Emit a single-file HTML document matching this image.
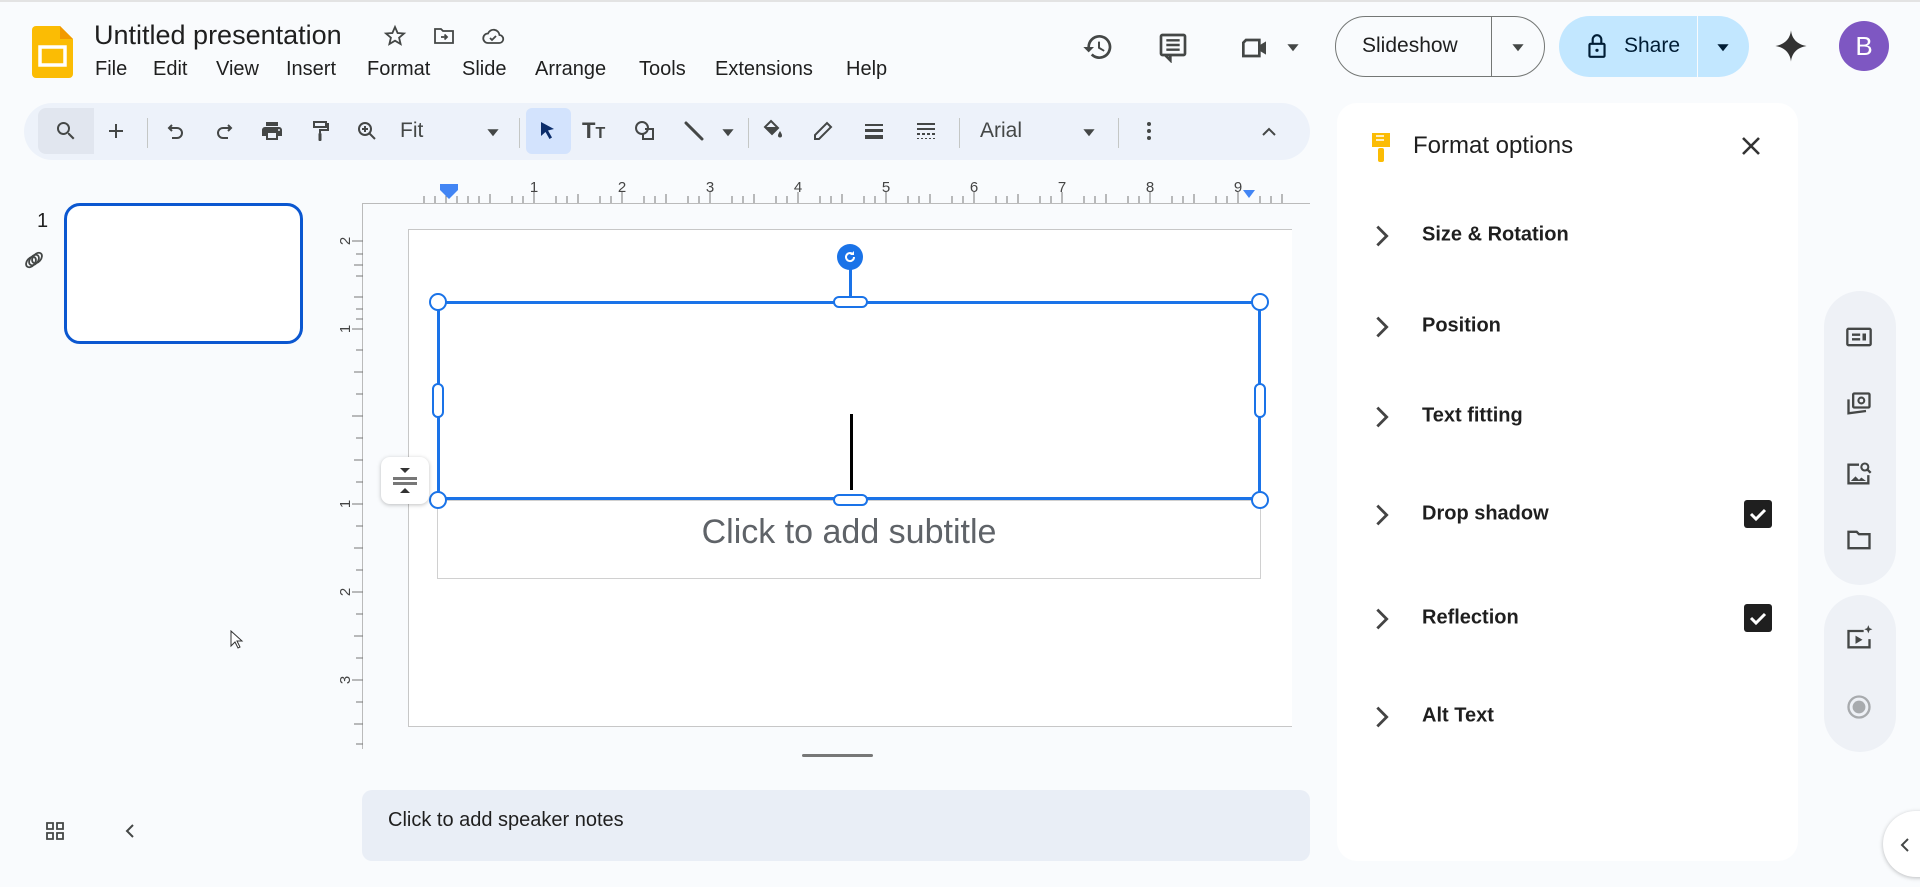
<!DOCTYPE html>
<html><head><meta charset="utf-8"><style>
*{box-sizing:border-box;margin:0;padding:0}
body{width:1920px;height:887px;background:#f9fbfd;font-family:"Liberation Sans",sans-serif;color:#1f1f1f;position:relative;overflow:hidden}
.a{position:absolute}
svg.i{position:absolute;width:24px;height:24px;fill:#444746}
.menu span{position:absolute;top:58px;font-size:20px;color:#1f1f1f}
.lbl{position:absolute;left:1422px;font-size:20px;font-weight:600;color:#1f1f1f;transform:translateY(-50%)}
.chev{position:absolute;left:1368px;width:28px;height:28px;transform:translateY(-50%)}
.cb{position:absolute;left:1744px;width:28px;height:28px;background:#1f1f1f;border-radius:3px;transform:translateY(-50%)}
.h{position:absolute;width:18px;height:18px;border:2.5px solid #1a73e8;background:#fff;border-radius:50%;transform:translate(-50%,-50%)}
.div{position:absolute;top:118px;width:1px;height:30px;background:#c4c7c5}
.r{width:28px!important;height:28px!important}
</style></head><body>
<div class="a" style="left:0;top:0;width:1920px;height:2px;background:#e3e3e3"></div>
<svg class="a" style="left:32px;top:26px" width="41" height="52" viewBox="0 0 41 52"><path d="M4 0h24l13 13v35a4 4 0 0 1-4 4H4a4 4 0 0 1-4-4V4a4 4 0 0 1 4-4z" fill="#fbbc04"/><path d="M28 0l13 13H28z" fill="#f29900"/><rect x="8" y="21" width="25" height="18" fill="none" stroke="#fff" stroke-width="3.5"/></svg>
<div class="a" style="left:94px;top:20px;font-size:27px;color:#1f1f1f">Untitled presentation</div>
<svg class="i" style="left:383px;top:24px" viewBox="0 0 24 24"><path d="M12 3l2.6 6 6.4.5-4.9 4.2 1.5 6.3L12 16.7 6.4 20l1.5-6.3L3 9.5 9.4 9z" fill="none" stroke="#444746" stroke-width="1.8"/></svg>
<svg class="i" style="left:432px;top:24px" viewBox="0 0 24 24"><path d="M3 5h6l2 2h10v12H3z" fill="none" stroke="#444746" stroke-width="1.8"/><path d="M9 13h6m-2.5-2.5L15 13l-2.5 2.5" fill="none" stroke="#444746" stroke-width="1.8"/></svg>
<svg class="i" style="left:481px;top:24px" viewBox="0 0 24 24"><path d="M7 19h11a4 4 0 0 0 .5-8A6 6 0 0 0 7 9.5 4.5 4.5 0 0 0 7 19z" fill="none" stroke="#444746" stroke-width="1.8"/><path d="M9 14l2 2 4-4" fill="none" stroke="#444746" stroke-width="1.8"/></svg>
<div class="menu"><span style="left:95px">File</span><span style="left:153px">Edit</span><span style="left:216px">View</span><span style="left:286px">Insert</span><span style="left:367px">Format</span><span style="left:462px">Slide</span><span style="left:535px">Arrange</span><span style="left:639px">Tools</span><span style="left:715px">Extensions</span><span style="left:846px">Help</span></div>
<svg class="i" style="left:1082px;top:31px;width:32px;height:32px" viewBox="0 0 24 24"><path d="M13 3a9 9 0 0 0-9 9H1l4 4 4-4H6a7 7 0 1 1 2 4.9l-1.4 1.4A9 9 0 1 0 13 3zm-1 5v5l4.3 2.5.7-1.2-3.5-2.1V8z"/></svg>
<svg class="i" style="left:1157px;top:31px;width:32px;height:32px" viewBox="0 0 24 24"><path d="M4 3h16a1 1 0 0 1 1 1v13a1 1 0 0 1-1 1H6l-0 0v0l4 4V18H4a1 1 0 0 1-1-1V4a1 1 0 0 1 1-1z" fill="none" stroke="#444746" stroke-width="2"/><path d="M7 7h10M7 10.5h10M7 14h10" stroke="#444746" stroke-width="1.8"/></svg>
<svg class="i" style="left:1238px;top:32px;width:32px;height:32px" viewBox="0 0 24 24"><path d="M6 6h10v12H4V8z" fill="none" stroke="#444746" stroke-width="2"/><path d="M16 10l5-3v10l-5-3z" fill="#444746"/></svg>
<svg class="i" style="left:1286px;top:40px;width:14px;height:14px" viewBox="0 0 10 10"><path d="M1 3h8L5 8z"/></svg>
<div class="a" style="left:1335px;top:16px;width:210px;height:61px;border:1px solid #747775;border-radius:31px"></div>
<div class="a" style="left:1491px;top:16px;width:1px;height:61px;background:#747775"></div>
<div class="a" style="left:1362px;top:34px;font-size:21px;color:#1f1f1f">Slideshow</div>
<svg class="i" style="left:1511px;top:40px;width:14px;height:14px" viewBox="0 0 10 10"><path d="M1 3h8L5 8z"/></svg>
<div class="a" style="left:1559px;top:16px;width:190px;height:61px;background:#c2e7ff;border-radius:31px"></div>
<div class="a" style="left:1697px;top:16px;width:1px;height:61px;background:#f9fbfd"></div>
<svg class="i" style="left:1584px;top:32px;width:26px;height:28px" viewBox="0 0 24 26"><rect x="5" y="11" width="14" height="12" rx="1" fill="none" stroke="#001d35" stroke-width="2"/><path d="M8 11V7a4 4 0 0 1 8 0v4" fill="none" stroke="#001d35" stroke-width="2"/><circle cx="12" cy="17" r="1.5" fill="#001d35"/></svg>
<div class="a" style="left:1624px;top:34px;font-size:21px;color:#001d35">Share</div>
<svg class="i" style="left:1716px;top:40px;width:14px;height:14px" viewBox="0 0 10 10"><path d="M1 3h8L5 8z" fill="#001d35"/></svg>
<svg class="i" style="left:1774px;top:29px;width:34px;height:34px" viewBox="0 0 24 24"><path d="M12 1c.6 6 4.5 10 11 11-6.5 1-10.4 5-11 11-.6-6-4.5-10-11-11C7.5 11 11.4 7 12 1z" fill="#333"/></svg>
<div class="a" style="left:1839px;top:21px;width:50px;height:50px;border-radius:50%;background:#7e57c2;color:#fff;font-size:26px;text-align:center;line-height:50px">B</div>
<div class="a" style="left:24px;top:103px;width:1286px;height:57px;background:#edf2fa;border-radius:29px"></div>
<div class="a" style="left:38px;top:108px;width:56px;height:46px;background:#e1e6ef;border-radius:8px 0 0 8px"></div>
<div class="a" style="left:526px;top:108px;width:45px;height:46px;background:#d3e3fd;border-radius:6px"></div>
<svg class="i" style="left:54px;top:119px" viewBox="0 0 24 24"><path d="M15.5 14h-.79l-.28-.27A6.47 6.47 0 0 0 16 9.5 6.5 6.5 0 1 0 9.5 16c1.61 0 3.09-.59 4.23-1.57l.27.28v.79l5 4.99L20.49 19l-4.99-5zm-6 0C7.010 14 5 11.99 5 9.5S7.01 5 9.5 5 14 7.01 14 9.5 11.99 14 9.5 14z"/></svg>
<svg class="i" style="left:104px;top:119px" viewBox="0 0 24 24"><path d="M19 13h-6v6h-2v-6H5v-2h6V5h2v6h6v2z"/></svg>
<div class="div" style="left:147px"></div>
<svg class="i" style="left:164px;top:120px" viewBox="0 0 24 24"><path d="M8 5L5 8l3 3M5 8h8a5 5 0 0 1 0 10H8" fill="none" stroke="#444746" stroke-width="2"/></svg>
<svg class="i" style="left:212px;top:120px" viewBox="0 0 24 24"><path d="M16 5l3 3-3 3M19 8h-8a5 5 0 0 0 0 10h5" fill="none" stroke="#444746" stroke-width="2"/></svg>
<svg class="i" style="left:260px;top:119px" viewBox="0 0 24 24"><path d="M19 8H5c-1.66 0-3 1.34-3 3v6h4v4h12v-4h4v-6c0-1.66-1.34-3-3-3zm-3 11H8v-5h8v5zm3-7c-.55 0-1-.45-1-1s.45-1 1-1 1 .45 1 1-.45 1-1 1zm-1-9H6v4h12V3z"/></svg>
<svg class="i" style="left:308px;top:119px" viewBox="0 0 24 24"><path d="M6 3h12v5H6zM18 5h2v6h-8v3" fill="none" stroke="#444746" stroke-width="2"/><rect x="10.5" y="14" width="3" height="8" rx="1"/></svg>
<svg class="i" style="left:355px;top:119px" viewBox="0 0 24 24"><circle cx="10" cy="10" r="6" fill="none" stroke="#444746" stroke-width="2"/><path d="M14.5 14.5L20 20M10 7v6M7 10h6" stroke="#444746" stroke-width="2"/></svg>
<div class="a" style="left:400px;top:119px;font-size:21px;color:#444746">Fit</div>
<svg class="i" style="left:486px;top:125px;width:14px;height:14px" viewBox="0 0 10 10"><path d="M1 3h8L5 8z"/></svg>
<div class="div" style="left:519px"></div>
<svg class="i" style="left:535px;top:119px" viewBox="0 0 24 24"><path d="M6 3l13 7-6 1.5 4 7-2.5 1.5-4-7L6 17z" fill="#0b2d6b"/></svg>
<div class="a" style="left:582px;top:118px;font-size:22px;font-weight:bold;color:#444746">T<span style="font-size:16px">T</span></div>
<svg class="i" style="left:633px;top:119px" viewBox="0 0 24 24"><circle cx="9" cy="9" r="6" fill="none" stroke="#444746" stroke-width="2"/><path d="M12 10h8v10h-10v-5" fill="none" stroke="#444746" stroke-width="2"/></svg>
<svg class="i" style="left:682px;top:119px" viewBox="0 0 24 24"><path d="M4 4l16 16" stroke="#444746" stroke-width="3" stroke-linecap="round"/></svg>
<svg class="i" style="left:721px;top:125px;width:14px;height:14px" viewBox="0 0 10 10"><path d="M1 3h8L5 8z"/></svg>
<div class="div" style="left:748px"></div>
<svg class="i" style="left:761px;top:119px" viewBox="0 0 24 24"><path d="M10 2l7 7-6 6-7-7z" fill="none" stroke="#444746" stroke-width="2"/><path d="M4 8h13L11 15z"/><path d="M19 12s-2 3-2 4.5a2 2 0 0 0 4 0C21 15 19 12 19 12z"/></svg>
<svg class="i" style="left:811px;top:119px" viewBox="0 0 24 24"><path d="M4 20v-4L16 4l4 4L8 20z" fill="none" stroke="#444746" stroke-width="2"/></svg>
<svg class="i" style="left:862px;top:119px" viewBox="0 0 24 24"><path d="M3 5h18v2H3zm0 5h18v3H3zm0 6h18v4H3z"/></svg>
<svg class="i" style="left:914px;top:119px" viewBox="0 0 24 24"><path d="M3 4h18v2H3zm0 5h18v2H3zM3 14h3v2H3zm5 0h3v2H8zm5 0h3v2h-3zm5 0h3v2h-3zM3 19h2v1H3zm4 0h2v1H7zm4 0h2v1h-2zm4 0h2v1h-2zm4 0h2v1h-2z"/></svg>
<div class="div" style="left:959px"></div>
<div class="a" style="left:980px;top:119px;font-size:21px;color:#444746">Arial</div>
<svg class="i" style="left:1082px;top:125px;width:14px;height:14px" viewBox="0 0 10 10"><path d="M1 3h8L5 8z"/></svg>
<div class="div" style="left:1118px"></div>
<svg class="i" style="left:1137px;top:119px" viewBox="0 0 24 24"><circle cx="12" cy="5" r="2"/><circle cx="12" cy="12" r="2"/><circle cx="12" cy="19" r="2"/></svg>
<svg class="i" style="left:1257px;top:120px" viewBox="0 0 24 24"><path d="M6 15l6-6 6 6" fill="none" stroke="#444746" stroke-width="2"/></svg>
<div class="a" style="left:37px;top:210px;font-size:20px;color:#1f1f1f">1</div>
<svg class="i" style="left:22px;top:248px" viewBox="0 0 24 24"><g fill="none" stroke="#444746" stroke-width="1.8"><ellipse cx="9" cy="14" rx="4" ry="6" transform="rotate(40 9 14)"/><ellipse cx="12" cy="12" rx="4" ry="6" transform="rotate(40 12 12)"/><ellipse cx="15" cy="10" rx="4" ry="6" transform="rotate(40 15 10)"/></g></svg>
<div class="a" style="left:64px;top:203px;width:239px;height:141px;border:3px solid #0b57d0;border-radius:16px;background:#fff"></div>
<svg class="i" style="left:43px;top:819px" viewBox="0 0 24 24"><path d="M4 4h6v6H4zm10 0h6v6h-6zM4 14h6v6H4zm10 0h6v6h-6z" fill="none" stroke="#444746" stroke-width="1.8"/></svg>
<svg class="i" style="left:118px;top:819px" viewBox="0 0 24 24"><path d="M15 6l-6 6 6 6" fill="none" stroke="#444746" stroke-width="2"/></svg>
<svg class="a" style="left:362px;top:178px" width="948" height="26">
<line x1="0" y1="25.5" x2="948" y2="25.5" stroke="#bbb"/>
<g stroke="#777">
<path d="M62 18v7M73 18v7M95 18v7M106 18v7M117 18v7M128 18v7M150 18v7M161 18v7M172 18v7M194 18v7M205 18v7M216 18v7M238 18v7M249 18v7M260 18v7M282 18v7M293 18v7M304 18v7M326 18v7M337 18v7M348 18v7M370 18v7M381 18v7M392 18v7M414 18v7M425 18v7M436 18v7M458 18v7M469 18v7M480 18v7M502 18v7M513 18v7M524 18v7M546 18v7M557 18v7M568 18v7M590 18v7M601 18v7M612 18v7M634 18v7M645 18v7M656 18v7M678 18v7M689 18v7M700 18v7M722 18v7M733 18v7M744 18v7M766 18v7M777 18v7M788 18v7M810 18v7M821 18v7M832 18v7M854 18v7M865 18v7M876 18v7M898 18v7M909 18v7M920 18v7"/>
<path d="M84 14v11M128 16v9M172 14v11M216 16v9M260 14v11M304 16v9M348 14v11M392 16v9M436 14v11M480 16v9M524 14v11M568 16v9M612 14v11M656 16v9M700 14v11M744 16v9M788 14v11M832 16v9M876 14v11M920 16v9"/>
</g>
<g font-size="15" fill="#444" text-anchor="middle" font-family="Liberation Sans">
<text x="172" y="14">1</text><text x="260" y="14">2</text><text x="348" y="14">3</text><text x="436" y="14">4</text><text x="524" y="14">5</text><text x="612" y="14">6</text><text x="700" y="14">7</text><text x="788" y="14">8</text><text x="876" y="14">9</text></g>
<rect x="78" y="6" width="18" height="6" fill="#4285f4"/><path d="M78 12h18l-9 9z" fill="#4285f4"/>
<path d="M881 12h12l-6 8z" fill="#4285f4"/>
</svg>
<svg class="a" style="left:336px;top:204px" width="27" height="545">
<line x1="26.5" y1="0" x2="26.5" y2="545" stroke="#bbb"/>
<g stroke="#777"><path d="M16 37h11M18 61h9M16 125h11M18 93h9M20 72h7M20 50h7M20 105h7M20 115h7M16 212h11M18 168h9M20 146h7M20 190h7M16 300h11M18 256h9M20 234h7M20 278h7M18 344h9M20 322h7M20 366h7M16 388h11M18 432h9M20 410h7M20 454h7M16 476h11M18 520h9M20 498h7M20 540h7"/></g>
<g font-size="15" fill="#444" font-family="Liberation Sans" text-anchor="middle"><text transform="translate(14 37) rotate(-90)">2</text><text transform="translate(14 125) rotate(-90)">1</text><text transform="translate(14 300) rotate(-90)">1</text><text transform="translate(14 388) rotate(-90)">2</text><text transform="translate(14 476) rotate(-90)">3</text></g>
</svg>
<div class="a" style="left:408px;top:229px;width:884px;height:498px;background:#fff;border:1px solid #c7c7c7;border-right:none"></div>
<div class="a" style="left:437px;top:500px;width:824px;height:79px;border:1px solid #d0d0d0"></div>
<div class="a" style="left:437px;top:513px;width:824px;text-align:center;font-size:34px;color:#5f6368">Click to add subtitle</div>
<div class="a" style="left:437px;top:301px;width:824px;height:199px;border:3px solid #1a73e8"></div>
<div class="a" style="left:849px;top:268px;width:3px;height:33px;background:#1a73e8"></div>
<div class="a" style="left:837px;top:244px;width:26px;height:26px;border-radius:50%;background:#1a73e8"></div>
<svg class="a" style="left:842px;top:249px" width="16" height="16" viewBox="0 0 16 16"><path d="M12 8a4 4 0 1 1-1.2-2.8" fill="none" stroke="#fff" stroke-width="2"/><path d="M12 2v4H8z" fill="#fff"/></svg>
<div class="h" style="left:438px;top:302px"></div><div class="h" style="left:1260px;top:302px"></div>
<div class="h" style="left:438px;top:500px"></div><div class="h" style="left:1260px;top:500px"></div>
<div class="a" style="left:833px;top:296px;width:35px;height:12px;border:2.5px solid #1a73e8;border-radius:6px;background:#fff"></div>
<div class="a" style="left:833px;top:494px;width:35px;height:12px;border:2.5px solid #1a73e8;border-radius:6px;background:#fff"></div>
<div class="a" style="left:432px;top:383px;width:12px;height:35px;border:2.5px solid #1a73e8;border-radius:6px;background:#fff"></div>
<div class="a" style="left:1254px;top:383px;width:12px;height:35px;border:2.5px solid #1a73e8;border-radius:6px;background:#fff"></div>
<div class="a" style="left:850px;top:414px;width:3px;height:76px;background:#000"></div>
<div class="a" style="left:381px;top:457px;width:48px;height:47px;background:#fff;border-radius:9px;box-shadow:0 1px 4px rgba(0,0,0,.25)"></div>
<svg class="a" style="left:392px;top:467px" width="26" height="27" viewBox="0 0 26 27"><path d="M8 1h10l-5 5z" fill="#333"/><rect x="1" y="10" width="24" height="3" fill="#777"/><rect x="1" y="15" width="24" height="3" fill="#777"/><path d="M8 26h10l-5-5z" fill="#333"/></svg>
<svg class="a" style="left:230px;top:630px" width="14" height="20" viewBox="0 0 14 20"><path d="M1 1v15l4-4 3 6 2-1-3-6h5z" fill="#fff" stroke="#333" stroke-width="1"/></svg>
<div class="a" style="left:802px;top:754px;width:71px;height:3px;background:#777;border-radius:2px"></div>
<div class="a" style="left:362px;top:790px;width:948px;height:71px;background:#e9eef6;border-radius:10px"></div>
<div class="a" style="left:388px;top:809px;font-size:20px;color:#1f1f1f">Click to add speaker notes</div>
<div class="a" style="left:1337px;top:103px;width:461px;height:758px;background:#fff;border-radius:20px"></div>
<svg class="a" style="left:1370px;top:132px" width="22" height="32" viewBox="0 0 22 32"><path d="M2 1h18v14H2z" fill="#fbbc04"/><path d="M6 4h8M6 8h8" stroke="#fff" stroke-width="1.6"/><rect x="8" y="16" width="6" height="14" rx="2" fill="#fbbc04"/></svg>
<div class="a" style="left:1413px;top:132px;font-size:24px;color:#1f1f1f">Format options</div>
<svg class="a" style="left:1739px;top:134px" width="24" height="24" viewBox="0 0 24 24"><path d="M4 4l16 16M20 4L4 20" stroke="#333" stroke-width="2.6"/></svg>
<svg class="chev" style="top:236px" viewBox="0 0 24 24"><path d="M8 4l8 8-8 8" fill="none" stroke="#444" stroke-width="2.4"/></svg><div class="lbl" style="top:235px">Size &amp; Rotation</div>
<svg class="chev" style="top:327px" viewBox="0 0 24 24"><path d="M8 4l8 8-8 8" fill="none" stroke="#444" stroke-width="2.4"/></svg><div class="lbl" style="top:326px">Position</div>
<svg class="chev" style="top:417px" viewBox="0 0 24 24"><path d="M8 4l8 8-8 8" fill="none" stroke="#444" stroke-width="2.4"/></svg><div class="lbl" style="top:416px">Text fitting</div>
<svg class="chev" style="top:515px" viewBox="0 0 24 24"><path d="M8 4l8 8-8 8" fill="none" stroke="#444" stroke-width="2.4"/></svg><div class="lbl" style="top:514px">Drop shadow</div>
<svg class="chev" style="top:619px" viewBox="0 0 24 24"><path d="M8 4l8 8-8 8" fill="none" stroke="#444" stroke-width="2.4"/></svg><div class="lbl" style="top:618px">Reflection</div>
<svg class="chev" style="top:717px" viewBox="0 0 24 24"><path d="M8 4l8 8-8 8" fill="none" stroke="#444" stroke-width="2.4"/></svg><div class="lbl" style="top:716px">Alt Text</div>
<div class="cb" style="top:514px"><svg width="28" height="28" viewBox="0 0 28 28"><path d="M7 14l5 5 9-9" fill="none" stroke="#fff" stroke-width="3"/></svg></div>
<div class="cb" style="top:618px"><svg width="28" height="28" viewBox="0 0 28 28"><path d="M7 14l5 5 9-9" fill="none" stroke="#fff" stroke-width="3"/></svg></div>
<div class="a" style="left:1824px;top:291px;width:72px;height:294px;background:#eef1f6;border-radius:36px"></div>
<div class="a" style="left:1824px;top:595px;width:72px;height:157px;background:#eef1f6;border-radius:36px"></div>
<svg class="i r" style="left:1845px;top:323px" viewBox="0 0 24 24"><rect x="2" y="5" width="20" height="14" rx="1" fill="none" stroke="#444746" stroke-width="2"/><path d="M6 10h7M6 14h7" stroke="#444746" stroke-width="2"/><rect x="15" y="9" width="3" height="6"/></svg>
<svg class="i r" style="left:1845px;top:390px" viewBox="0 0 24 24"><rect x="7" y="3" width="14" height="12" rx="1" fill="none" stroke="#444746" stroke-width="2"/><circle cx="14" cy="9" r="2.5" fill="none" stroke="#444746" stroke-width="1.8"/><path d="M3 8v12l15-2" fill="none" stroke="#444746" stroke-width="2"/></svg>
<svg class="i r" style="left:1845px;top:460px" viewBox="0 0 24 24"><path d="M12 4H3v16h17v-7" fill="none" stroke="#444746" stroke-width="2"/><path d="M5 18l4-4 3 3 2-2 4 3z"/><circle cx="17" cy="6" r="3" fill="none" stroke="#444746" stroke-width="1.8"/><path d="M19 8l3 3" stroke="#444746" stroke-width="2"/></svg>
<svg class="i r" style="left:1845px;top:526px" viewBox="0 0 24 24"><path d="M3 5h7l2 2h9v12H3z" fill="none" stroke="#444746" stroke-width="2"/></svg>
<svg class="i r" style="left:1845px;top:624px" viewBox="0 0 24 24"><path d="M16 6H3v14h18v-7" fill="none" stroke="#444746" stroke-width="2"/><path d="M9 10v7l6-3.5z"/><path d="M20 1l1 2.5 2.5 1-2.5 1L20 8l-1-2.5-2.5-1 2.5-1z"/></svg>
<svg class="i r" style="left:1845px;top:693px" viewBox="0 0 24 24"><circle cx="12" cy="12" r="9" fill="none" stroke="#a8abae" stroke-width="2"/><circle cx="12" cy="12" r="5.5" fill="#a8abae"/></svg>
<div class="a" style="left:1883px;top:811px;width:70px;height:66px;background:#fff;border-radius:33px;box-shadow:0 1px 4px rgba(0,0,0,.25)"></div>
<svg class="i" style="left:1893px;top:833px" viewBox="0 0 24 24"><path d="M15 6l-6 6 6 6" fill="none" stroke="#444746" stroke-width="2"/></svg>
</body></html>
